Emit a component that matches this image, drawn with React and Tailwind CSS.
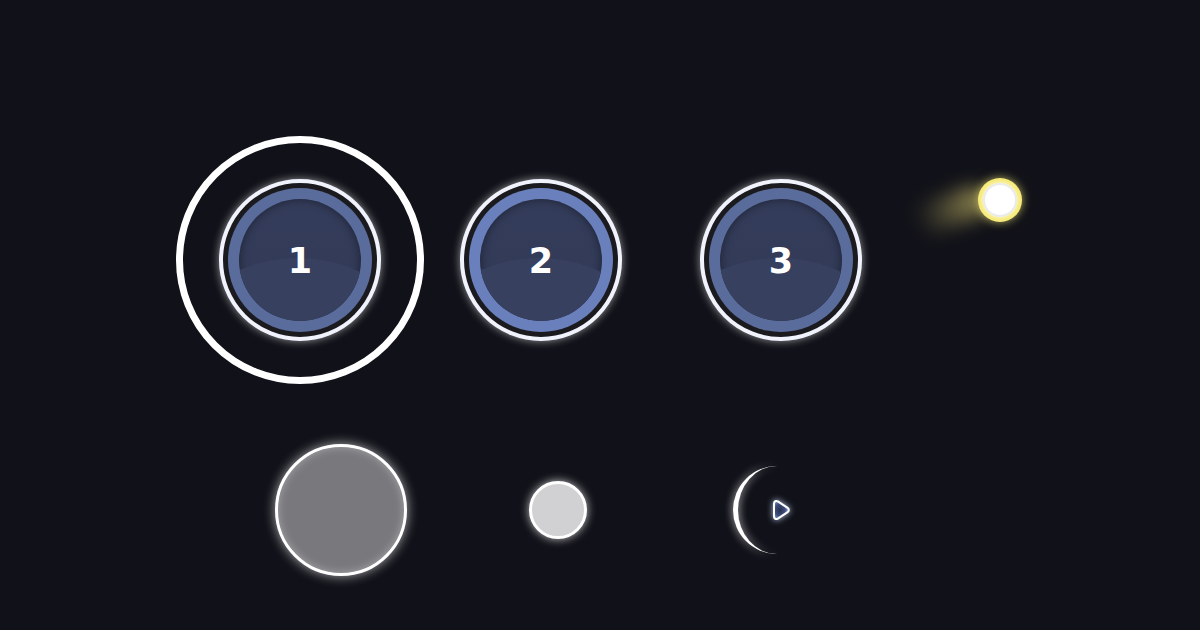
function StepButton({ n, ring }) {
  return (
    <div className="w-[162px] h-[162px] rounded-full border-[4px] border-[#f0f2fc] bg-[#1b1b1f] p-[5px] shadow-[0_0_9px_rgba(255,255,255,0.55)]">
      <div className={`w-full h-full rounded-full p-[11px] ${ring}`}>
        <div className="relative w-full h-full rounded-full overflow-hidden bg-gradient-to-b from-[#333c5a] to-[#323a56] shadow-[inset_0_0_10px_rgba(0,0,0,0.45)] flex items-center justify-center">
          <div className="absolute left-[-60%] right-[-60%] top-[48%] h-[200%] rounded-[50%] bg-[#37405f] rotate-[5deg]" />
          <span className="relative mt-[3px] text-[35px] font-bold leading-none text-white font-['DejaVu_Sans',sans-serif]">
            {n}
          </span>
        </div>
      </div>
    </div>
  );
}

export default function App() {
  return (
    <div className="w-[1200px] h-[630px] bg-[#111219] overflow-hidden">
      <div className="flex items-center pl-[176px] pt-[136px]">
        <div className="w-[248px] h-[248px] rounded-full border-[7px] border-white flex items-center justify-center">
          <StepButton n="1" ring="bg-[#5a6c9b]" />
        </div>
        <div className="ml-[36px]">
          <StepButton n="2" ring="bg-[#6a80bd]" />
        </div>
        <div className="ml-[78px]">
          <StepButton n="3" ring="bg-[#5a6c9b]" />
        </div>
        <div className="relative ml-[116px] mt-[-120px] w-[44px] h-[44px]">
          <div className="absolute left-[-64px] top-[16px] w-[76px] h-[32px] rounded-full bg-gradient-to-r from-transparent to-[#f3e27a] opacity-60 blur-[9px] rotate-[-20deg]" />
          <div className="relative w-[44px] h-[44px] rounded-full bg-[#f6ea78] p-[5px] shadow-[0_0_10px_rgba(246,234,120,0.7)]">
            <div className="w-full h-full rounded-full bg-white border-[2px] border-[#ebebeb] shadow-[0_0_4px_rgba(255,255,255,0.9)]" />
          </div>
        </div>
      </div>

      <div className="flex items-center pl-[275px] mt-[60px] h-[132px]">
        <div className="w-[132px] h-[132px] rounded-full bg-[#78787d] border-[3px] border-white shadow-[0_0_12px_rgba(255,255,255,0.65),inset_0_0_8px_rgba(255,255,255,0.35)]" />
        <div className="ml-[122px] w-[58px] h-[58px] rounded-full bg-[#d1d1d3] border-[3px] border-white shadow-[0_0_10px_rgba(255,255,255,0.75)]" />
        <div className="relative ml-[146px] w-[88px] h-[88px]">
          <div className="w-full h-full rounded-full border-l-[5px] border-white drop-shadow-[0_0_4px_rgba(255,255,255,0.8)]" />
          <svg
            className="absolute left-[36px] top-[32px] drop-shadow-[0_0_3px_rgba(200,215,255,0.9)]"
            width="24"
            height="24"
            viewBox="0 0 24 24"
          >
            <defs>
              <radialGradient id="pg" cx="0.4" cy="0.5" r="0.6">
                <stop offset="0" stopColor="#26304c" />
                <stop offset="0.55" stopColor="#3d4c7c" />
                <stop offset="1" stopColor="#8ea3e2" />
              </radialGradient>
            </defs>
            <path
              d="M5 5.5 C5 3.3 7 2.4 8.8 3.4 L18.6 9.8 C20.2 10.9 20.2 13.1 18.6 14.2 L8.8 20.6 C7 21.6 5 20.7 5 18.5 Z"
              fill="url(#pg)"
              stroke="white"
              strokeWidth="2"
              strokeLinejoin="round"
            />
          </svg>
        </div>
      </div>
    </div>
  );
}
